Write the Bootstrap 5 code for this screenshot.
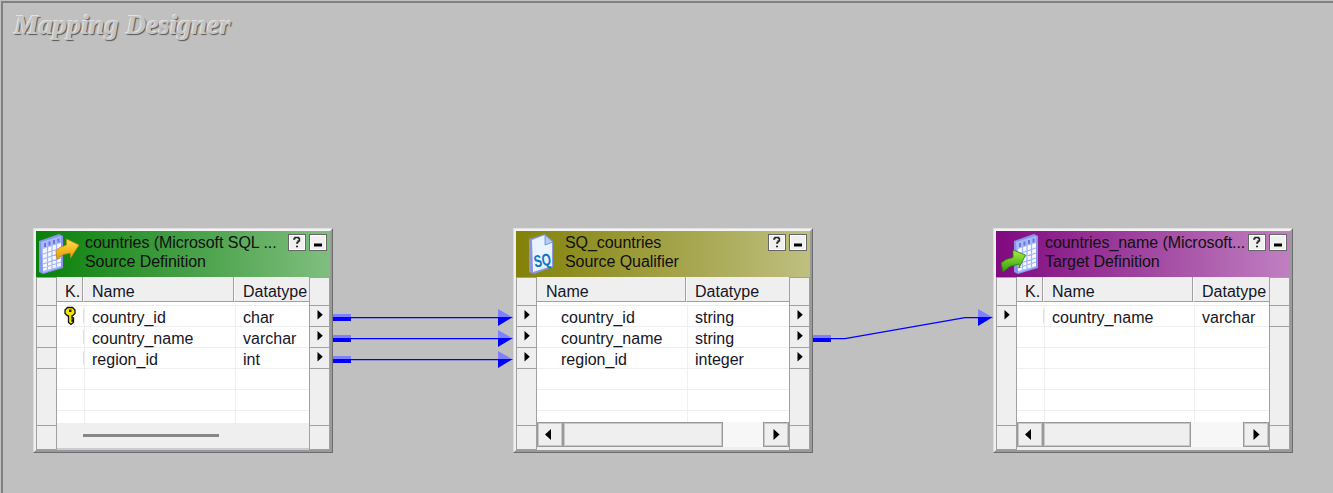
<!DOCTYPE html>
<html lang="en">
<head>
<meta charset="utf-8">
<title>Mapping Designer</title>
<link href="https://cdn.jsdelivr.net/npm/bootstrap@5.3.0/dist/css/bootstrap.min.css" rel="stylesheet">
<style>
body{background:#c0c0c0;font:16px/21px "Liberation Sans",Arial,sans-serif;color:#151525}
.workspace{height:493px;border:solid #c0c0c0;border-width:1px 0 0 1px;background:#c0c0c0}
.surface{height:492px;border:solid #808080;border-width:2px 0 0 2px}
.title{font:italic bold 28px/32px "Liberation Serif",serif;letter-spacing:.08px;color:#c4c4c4;text-shadow:-1px -1px 0 #e2e2e2,1px 1px 1px #555;margin:0;padding:6px 0 0 11px}
.links{left:0;top:0}
.node{top:228px;width:300px;height:225px;border:3px solid;border-color:#f3f3f3 #999 #999 #f0f0f0;background:#efefef}
.node::after{content:"";position:absolute;inset:-3px;border:1px solid;border-color:#e2e2e2 #6d6d6d #6d6d6d #dcdcdc;pointer-events:none}
.n1{left:33px;--cols:27px 151px 74px}
.n2{left:513px;--cols:150px 102px}
.n3{left:993px;--cols:27px 150px 75px}
.cap{height:46px;color:#101010;line-height:19px}
.n1 .cap{background:linear-gradient(90deg,#098009,#80be80)}
.n2 .cap{background:linear-gradient(90deg,#828209,#bfbf80)}
.n3 .cap{background:linear-gradient(90deg,#800980,#c080c0)}
.cap svg{width:49px;height:46px;flex:none}
.captext{padding-top:2px;width:200px;letter-spacing:-.06px}
.sqbtn{width:18px;height:17px;border:1px solid #666;background:#f0f0f0;box-shadow:inset 0 0 0 1px #fff;margin:3px 0 0 3px}
.sqbtn svg{width:16px;height:15px}
.gutter{width:21px;height:173px;border:1px solid #a0a0a0;border-width:1px 1px 0 1px;flex:none}
.gutter div{height:21px;border-bottom:1px solid #a0a0a0}
.gutter .g0{height:28px}.gutter .gx{height:57px}.gutter .gy{height:24px}
.gutter .gl{height:99px}
.gutter svg{display:block;width:19px;height:20px}
.list{width:252px;height:173px}
.cells{display:grid;grid-template-columns:var(--cols)}
.cells>div{white-space:nowrap;overflow:hidden}
.hd{height:25px;background:#efefef}
.hd>div{border-bottom:1px solid #a0a0a0;border-right:1px solid #fafafa;box-shadow:inset -1px 0 #a0a0a0;line-height:29px;height:25px;padding-left:8px}
.hd>div:last-child{border-right:0;box-shadow:none}
.rws{height:121px;background:#fff;overflow:hidden;padding-top:3px}
.rws .cells{height:21px;border-top:1px solid #efefef}
.rws .cells>div{line-height:23px;height:21px;padding-left:8px}
.rws .cells>div+div{border-left:1px solid #efefef}
.rws .cells>div:not(:first-child){padding-left:7px}
.n2 .rws .cells>div:first-child{padding-left:24px}
.n2 .hd>div:first-child{padding-left:9px}
.keycell{padding:0!important}
.keycell.mk{background:linear-gradient(#ffdc9a,#ffdc9a) right 3px/1px 14px no-repeat}
.keycell svg{display:block}
.idle{height:27px;padding:11px 0 0 26px;border-bottom:2px solid #c9ccd2}
.idle div{width:136px;height:3px;background:#868686}
.sbar{height:25px;background:#f7f7f7;margin-top:-1px}
.sbar .bx{border:1px solid #999;box-shadow:inset 0 0 0 1px #c8c8c8;background:#efefef;height:25px}
.sbar svg{display:block}
.arr{width:26px}
.n2 .thumb{width:160px}.n3 .thumb{width:148px}
</style>
<script src="https://cdn.jsdelivr.net/npm/bootstrap@5.3.0/dist/js/bootstrap.bundle.min.js"></script>
</head>
<body class="overflow-hidden">
<svg width="0" height="0" class="position-absolute">
<defs>
<linearGradient id="gold" x1="0" y1="0" x2="0" y2="1"><stop offset="0" stop-color="#ffe04c"/><stop offset="1" stop-color="#e59a00"/></linearGradient>
<linearGradient id="lime" x1="0" y1="0" x2="0" y2="1"><stop offset="0" stop-color="#a8f040"/><stop offset="1" stop-color="#2f9a08"/></linearGradient>
<symbol id="sheet" viewBox="0 0 26 42"><path d="M1 8 21 1 25 3V35L5 41 1 39Z" fill="#8795ee"/><path d="M3 9 23 3V34L5 40Z" fill="#aab9ff"/><path d="M5 16 23 10V33L5 38Z" fill="#f5f8ff"/><path d="M5 21 23 15M5 26 23 20M5 31 23 25M5 35 23 29M9.500 9V37M14 7V36M18.500 5V34" stroke="#a5b5f6" stroke-width="1.200" fill="none"/><path d="M7 10V14M11.500 8.500V12.500M16 7V11M20.500 5.500V9.500" stroke="#6678da" stroke-width="2"/></symbol>
<symbol id="tri" viewBox="0 0 19 20"><path d="M7.500 4V13.500L12.800 8.800Z"/></symbol>
<symbol id="help" viewBox="0 0 16 15"><path d="M5 5V3.500H6V2.500H9.500V3.500H10.500V6H9V7.500H8V9M7 11.500H9" fill="none" stroke="#222" stroke-width="1.300"/></symbol>
<symbol id="min" viewBox="0 0 16 15"><path d="M4 8.500H12V11.500H4Z"/></symbol>
<symbol id="key" viewBox="0 0 26 21"><path d="M10.500 1.500H15.500L18 4V7.500L15.500 9.800H15V12H16.500V14H15V15H16.500V16.500L14 18.500 11.500 16.500V9.800H10.500L8 7.500V4Z" fill="#f5e500" stroke="#111" stroke-width="1.300"/><path d="M12 3.500H14.500V6H12Z" fill="#222"/></symbol>
<symbol id="left" viewBox="0 0 24 23"><path d="M13 6V17L7 11.500Z"/></symbol>
<symbol id="right" viewBox="0 0 24 23"><path d="M9.500 6V17L15.500 11.500Z"/></symbol>
<symbol id="stub" viewBox="0 0 18 8"><path d="M0 0H18V3H0Z" fill="#8080ff"/><path d="M0 3H18V7H0Z" fill="#00f"/></symbol>
<symbol id="head" viewBox="0 0 15 17"><path d="M0 0 15 8.500H0Z" fill="#8080ff"/><path d="M0 8H15L0 17Z" fill="#00f"/></symbol>
</defs>
</svg>
<main class="workspace"><div class="surface"><h1 class="title">Mapping Designer</h1></div></main>

<svg class="links position-absolute" width="1333" height="493">
<g fill="none" stroke="#00f" stroke-width="1.300"><path d="M350 317.700H500M350 338.700H500M350 359.700H500M830 338.700H845L965 317.700H980"/></g>
<use href="#stub" x="333" y="314" width="18" height="8"/><use href="#stub" x="333" y="335" width="18" height="8"/><use href="#stub" x="333" y="356" width="18" height="8"/><use href="#stub" x="813" y="335" width="18" height="8"/>
<use href="#head" x="498" y="309" width="15" height="17"/><use href="#head" x="498" y="330" width="15" height="17"/><use href="#head" x="498" y="351" width="15" height="17"/><use href="#head" x="978" y="309" width="15" height="17"/>
</svg>

<section class="node n1 position-absolute">
<header class="cap d-flex">
<svg viewBox="0 0 49 46"><use href="#sheet" x="2" y="2" width="26" height="42"/><path d="M20 19.500 24 16.500 30.500 14V8L43 14 34.500 27V22L27 23.500 21 28.500Z" fill="url(#gold)" stroke="#c08a10" stroke-width=".8"/></svg>
<div class="captext text-nowrap"><div>countries (Microsoft SQL ...</div><div>Source Definition</div></div>
<div class="sqbtn"><svg class="d-block"><use href="#help"/></svg></div><div class="sqbtn"><svg class="d-block"><use href="#min"/></svg></div>
</header>
<div class="d-flex">
<div class="gutter"><div class="g0"></div><div></div><div></div><div></div><div class="gx"></div><div class="gy"></div></div>
<div class="list">
<div class="cells hd"><div>K.</div><div>Name</div><div>Datatype</div></div>
<div class="rws">
<div class="cells"><div class="keycell mk"><svg width="26" height="21"><use href="#key"/></svg></div><div>country_id</div><div>char</div></div>
<div class="cells"><div class="keycell mk"></div><div>country_name</div><div>varchar</div></div>
<div class="cells"><div class="keycell mk"></div><div>region_id</div><div>int</div></div>
<div class="cells"><div></div><div></div><div></div></div><div class="cells"><div></div><div></div><div></div></div><div class="cells"><div></div><div></div><div></div></div>
</div>
<div class="idle"><div></div></div>
</div>
<div class="gutter"><div class="g0"></div><div><svg><use href="#tri"/></svg></div><div><svg><use href="#tri"/></svg></div><div><svg><use href="#tri"/></svg></div><div class="gx"></div><div class="gy"></div></div>
</div>
</section>

<section class="node n2 position-absolute">
<header class="cap d-flex">
<svg viewBox="0 0 49 46"><path d="M13 8 29 3 37 10V36L18 43 13 41Z" fill="#8b94e0"/><path d="M16 9 29 4 36 11V35L17 41Z" fill="#e9f3ff"/><path d="M29 4V14L37 11Z" fill="#b5ccf4" stroke="#6687d5" stroke-width=".8"/><text x="19" y="36.500" transform="rotate(-10 19 36.500)" font-family="Liberation Sans" font-size="17" font-weight="bold" fill="#0877c8" textLength="17" lengthAdjust="spacingAndGlyphs">SQ</text></svg>
<div class="captext text-nowrap"><div>SQ_countries</div><div>Source Qualifier</div></div>
<div class="sqbtn"><svg class="d-block"><use href="#help"/></svg></div><div class="sqbtn"><svg class="d-block"><use href="#min"/></svg></div>
</header>
<div class="d-flex">
<div class="gutter"><div class="g0"></div><div><svg><use href="#tri"/></svg></div><div><svg><use href="#tri"/></svg></div><div><svg><use href="#tri"/></svg></div><div class="gx"></div><div class="gy"></div></div>
<div class="list">
<div class="cells hd"><div>Name</div><div>Datatype</div></div>
<div class="rws">
<div class="cells"><div>country_id</div><div>string</div></div>
<div class="cells"><div>country_name</div><div>string</div></div>
<div class="cells"><div>region_id</div><div>integer</div></div>
<div class="cells"><div></div><div></div></div><div class="cells"><div></div><div></div></div><div class="cells"><div></div><div></div></div>
</div>
<div class="sbar d-flex"><div class="bx arr"><svg width="24" height="23"><use href="#left"/></svg></div><div class="bx thumb"></div><div class="bx arr ms-auto"><svg width="24" height="23"><use href="#right"/></svg></div></div>
</div>
<div class="gutter"><div class="g0"></div><div><svg><use href="#tri"/></svg></div><div><svg><use href="#tri"/></svg></div><div><svg><use href="#tri"/></svg></div><div class="gx"></div><div class="gy"></div></div>
</div>
</section>

<section class="node n3 position-absolute">
<header class="cap d-flex">
<svg viewBox="0 0 49 46"><use href="#sheet" x="17" y="2" width="26" height="42"/><path d="M5 32 10 28.500 17 26.500V19L29.500 24 23 37V33L14 35.500 7 41Z" fill="url(#lime)" stroke="#237c08" stroke-width=".8"/></svg>
<div class="captext text-nowrap"><div>countries_name (Microsoft...</div><div>Target Definition</div></div>
<div class="sqbtn"><svg class="d-block"><use href="#help"/></svg></div><div class="sqbtn"><svg class="d-block"><use href="#min"/></svg></div>
</header>
<div class="d-flex">
<div class="gutter"><div class="g0"></div><div><svg><use href="#tri"/></svg></div><div class="gl"></div><div class="gy"></div></div>
<div class="list">
<div class="cells hd"><div>K.</div><div>Name</div><div>Datatype</div></div>
<div class="rws">
<div class="cells"><div class="keycell mk"></div><div>country_name</div><div>varchar</div></div>
<div class="cells"><div></div><div></div><div></div></div><div class="cells"><div></div><div></div><div></div></div><div class="cells"><div></div><div></div><div></div></div><div class="cells"><div></div><div></div><div></div></div><div class="cells"><div></div><div></div><div></div></div>
</div>
<div class="sbar d-flex"><div class="bx arr"><svg width="24" height="23"><use href="#left"/></svg></div><div class="bx thumb"></div><div class="bx arr ms-auto"><svg width="24" height="23"><use href="#right"/></svg></div></div>
</div>
<div class="gutter"><div class="g0"></div><div></div><div class="gl"></div><div class="gy"></div></div>
</div>
</section>
</body>
</html>
